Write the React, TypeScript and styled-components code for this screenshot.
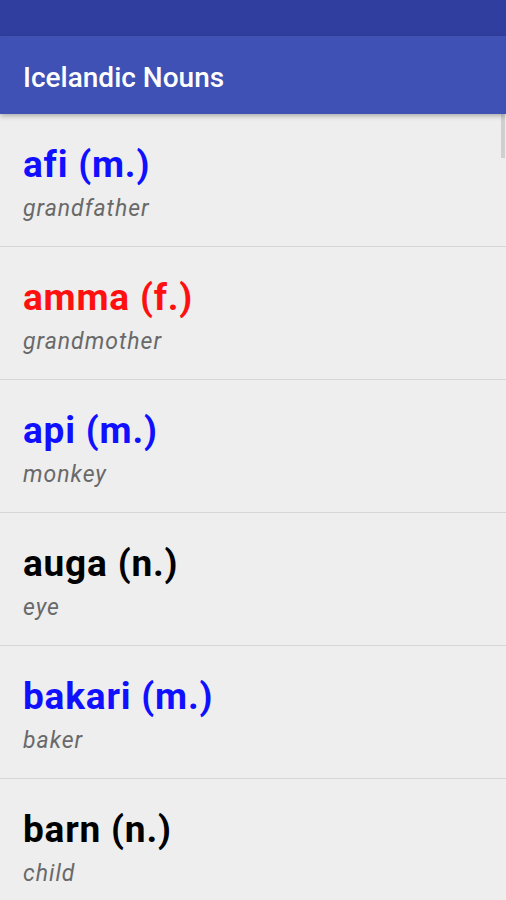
import React from "react";
import styled, { createGlobalStyle } from "styled-components";

type Gender = "m" | "f" | "n";

const nouns: { word: string; gender: Gender; meaning: string }[] = [
  { word: "afi", gender: "m", meaning: "grandfather" },
  { word: "amma", gender: "f", meaning: "grandmother" },
  { word: "api", gender: "m", meaning: "monkey" },
  { word: "auga", gender: "n", meaning: "eye" },
  { word: "bakari", gender: "m", meaning: "baker" },
  { word: "barn", gender: "n", meaning: "child" },
];

const genderColor: Record<Gender, string> = {
  m: "#1010ff",
  f: "#ff1010",
  n: "#000000",
};

const Global = createGlobalStyle`
  html, body {
    margin: 0;
    padding: 0;
    height: 900px;
    overflow: hidden;
    background: #eeeeee;
    font-family: Roboto, "Noto Sans", sans-serif;
  }
`;

const Screen = styled.div`
  position: relative;
  width: 506px;
  height: 900px;
  overflow: hidden;
  background: #eeeeee;
  display: flex;
  flex-direction: column;
`;

const StatusBar = styled.div`
  height: 36px;
  flex-shrink: 0;
  background: #303f9f;
`;

const Toolbar = styled.header`
  height: 78px;
  box-sizing: border-box;
  flex-shrink: 0;
  background: #3f51b5;
  display: flex;
  align-items: center;
  padding: 4px 0 0 23px;
  box-shadow: 0 2px 5px rgba(0, 0, 0, 0.28);
  position: relative;
  z-index: 2;
`;

const Title = styled.h1`
  margin: 0;
  color: #ffffff;
  font-size: 28px;
  font-weight: 500;
`;

const List = styled.ul`
  list-style: none;
  margin: 0;
  padding: 0;
  position: relative;
`;

const Item = styled.li`
  height: 133px;
  box-sizing: border-box;
  padding: 31px 23px 0;
  border-bottom: 1px solid #d6d6d6;
`;

const Word = styled.div<{ $color: string }>`
  font-size: 37px;
  line-height: 40px;
  font-weight: 700;
  letter-spacing: 0.8px;
  color: ${(p) => p.$color};
`;

const Meaning = styled.div`
  margin-top: 11px;
  font-size: 23px;
  line-height: 26px;
  font-style: italic;
  letter-spacing: 1px;
  color: #696969;
`;

const ScrollThumb = styled.div`
  position: absolute;
  top: 0;
  right: 1px;
  width: 4px;
  height: 44px;
  background: #cfcfcf;
`;

export default function App() {
  return (
    <>
      <Global />
      <Screen>
        <StatusBar />
        <Toolbar>
          <Title>Icelandic Nouns</Title>
        </Toolbar>
        <List>
          {nouns.map((n) => (
            <Item key={n.word}>
              <Word $color={genderColor[n.gender]}>
                {n.word} ({n.gender}.)
              </Word>
              <Meaning>{n.meaning}</Meaning>
            </Item>
          ))}
          <ScrollThumb />
        </List>
      </Screen>
    </>
  );
}
